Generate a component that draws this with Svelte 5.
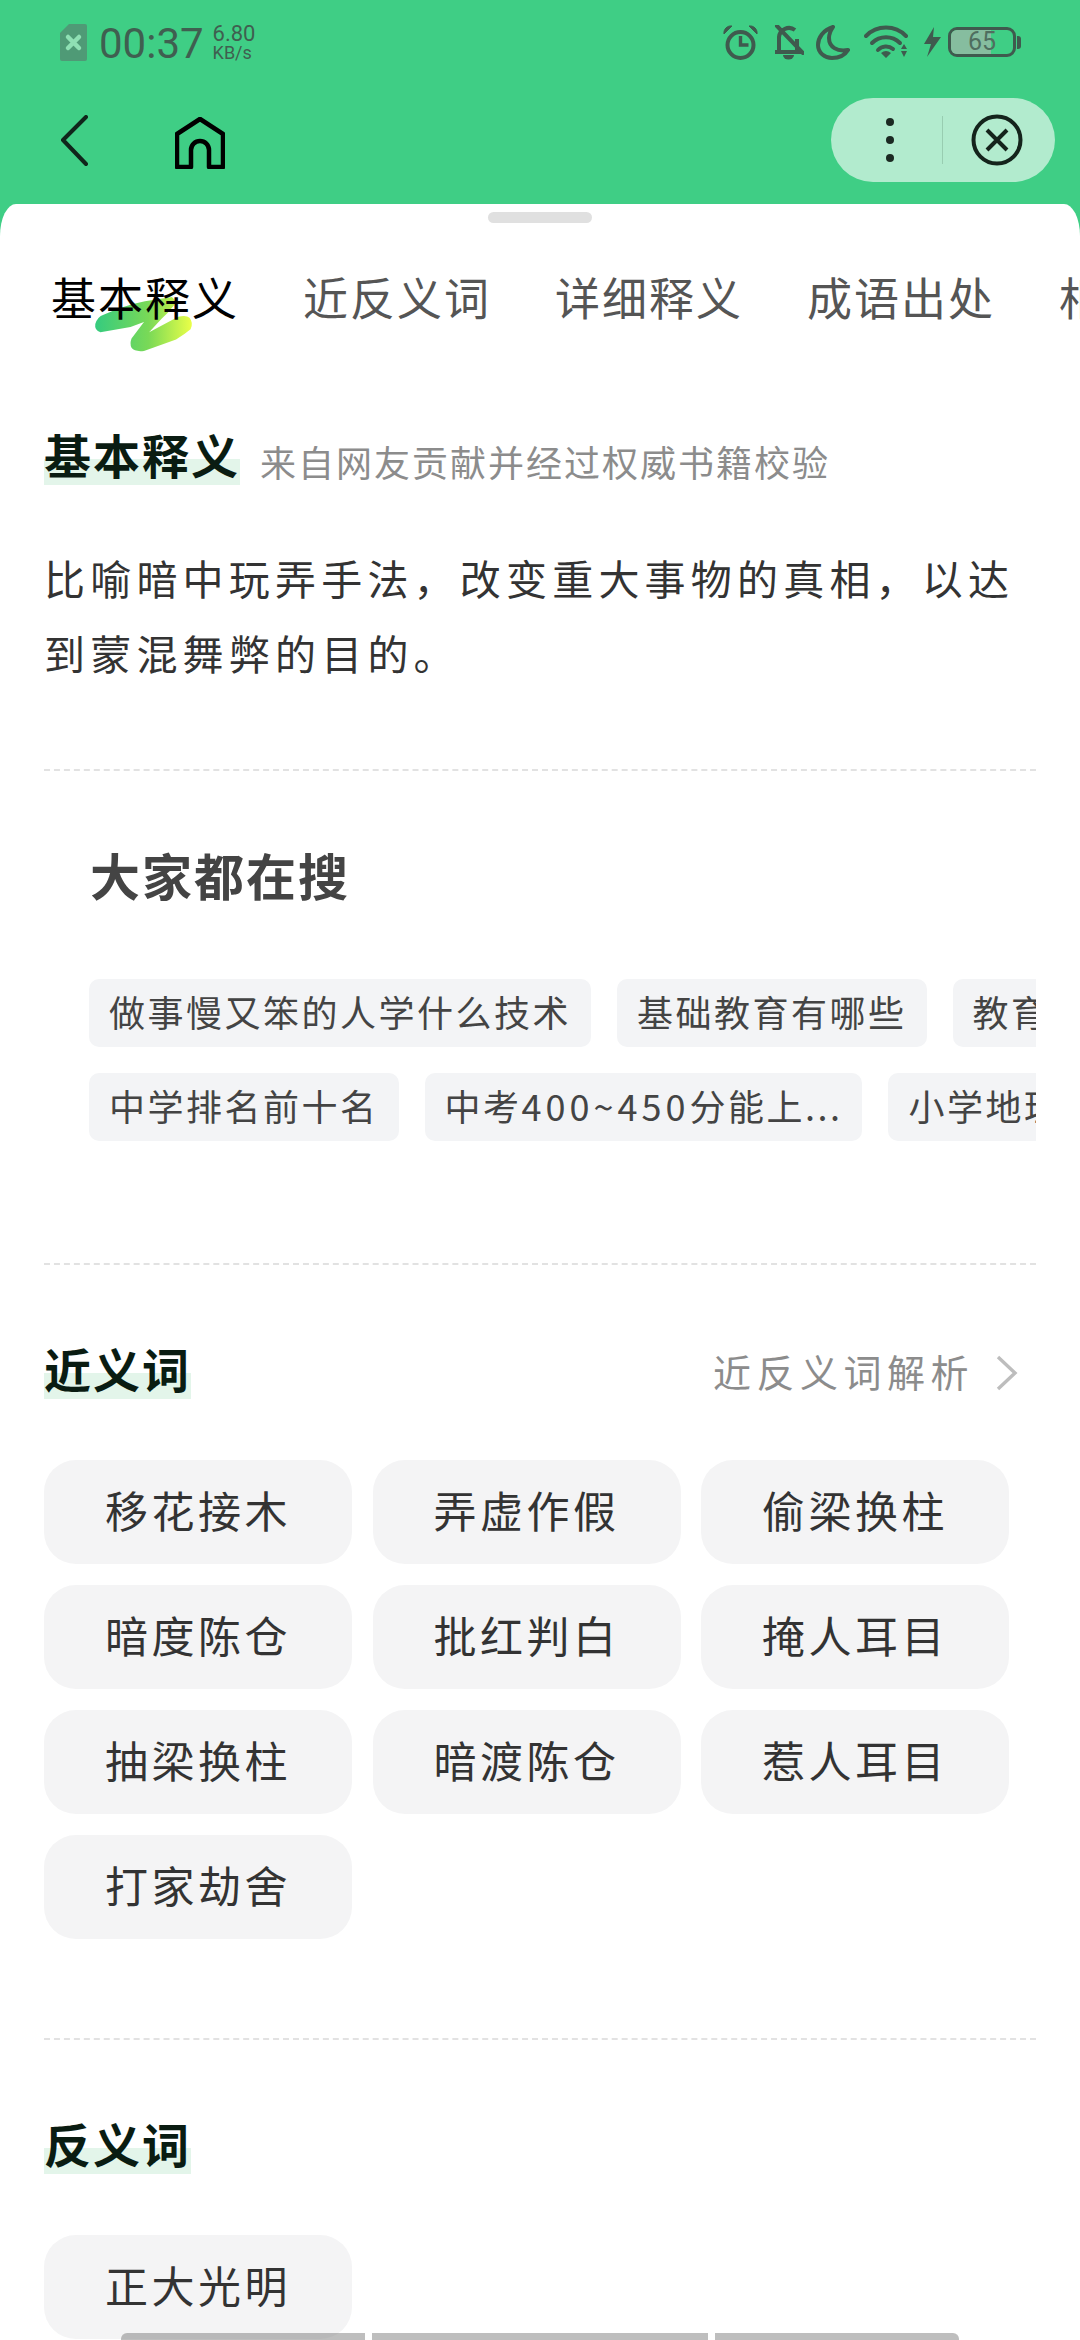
<script>
  const tabs = ["基本释义", "近反义词", "详细释义", "成语出处", "相关词语"];
  const searchRows = [
    ["做事慢又笨的人学什么技术", "基础教育有哪些", "教育培训机构"],
    ["中学排名前十名", "中考400~450分能上...", "小学地理知识"],
  ];
  const synonyms = [
    "移花接木", "弄虚作假", "偷梁换柱",
    "暗度陈仓", "批红判白", "掩人耳目",
    "抽梁换柱", "暗渡陈仓", "惹人耳目",
    "打家劫舍",
  ];
  const antonyms = ["正大光明"];

  // digits sit wider than the CJK run in the reference
  const splitDigits = (term) => term.split(/(\d+~\d+)/);
</script>

<div class="page">
  <header class="top">
    <div class="status">
      <div class="status-left">
        <svg class="sim" viewBox="0 0 27 37" width="27" height="37">
          <path d="M9 0h16a2 2 0 0 1 2 2v33a2 2 0 0 1-2 2H2a2 2 0 0 1-2-2V9z" fill="#4f9a76" />
          <path d="M8 13l11 11M19 13L8 24" stroke="#8fe0b4" stroke-width="4.5" stroke-linecap="round" />
        </svg>
        <span class="time">00:37</span>
        <span class="speed"><b>6.80</b><b class="unit">KB/s</b></span>
      </div>
      <div class="status-right">
        <svg class="ic-alarm" viewBox="0 0 35 35" width="35" height="35" fill="none" stroke="#3f5a4e">
          <circle cx="17.5" cy="20" r="13" stroke-width="4" />
          <path d="M17.5 11v9h8" stroke-width="3.4" />
          <path d="M1 9a7 7 0 0 1 8-8zM34 9a7 7 0 0 0-8-8z" fill="#3f5a4e" stroke-width="1" />
        </svg>
        <svg class="ic-bell" viewBox="0 0 31 35" width="31" height="35" fill="none" stroke="#3f5a4e" stroke-width="4">
          <path d="M6 27V12a10 10 0 0 1 16-7M24 14v13M2 27h27" />
          <path d="M10 30a5.500 4.500 0 0 0 11 0z" fill="#3f5a4e" stroke="none" />
          <path d="M4 1l26 27" stroke-linecap="round" />
        </svg>
        <svg class="ic-moon" viewBox="0 0 34 35" width="34" height="35" fill="none" stroke="#3f5a4e" stroke-width="4">
          <path d="M17 2C7 5 2 13 2 20c0 8 7 13 14 13 7 0 13-3 16-8-11 2-19-3-19-12 0-4 2-8 4-11z" stroke-linejoin="round" />
        </svg>
        <svg class="ic-wifi" viewBox="0 0 46 35" width="46" height="35" fill="none" stroke="#3f5a4e">
          <path d="M2 11a28 28 0 0 1 40 0" stroke-width="4" stroke-linecap="round" />
          <path d="M8 18a20 20 0 0 1 28 0" stroke-width="4" stroke-linecap="round" />
          <path d="M14 25a11 11 0 0 1 15-1" stroke-width="4" stroke-linecap="round" />
          <path d="M17 28a8 8 0 0 1 10 0l-5 5zM37 24l3-5 3 5zM37 26h6l-3 6z" fill="#3f5a4e" stroke="none" />
        </svg>
        <svg class="ic-bolt" viewBox="0 0 17 30" width="17" height="30">
          <path d="M10 0L0 17h7L3 30 17 10H9z" fill="#3f5a4e" />
        </svg>
        <div class="battery">
          <div class="battery-body"><i class="battery-fill"></i><span>65</span></div>
          <i class="battery-cap"></i>
        </div>
      </div>
    </div>

    <div class="nav">
      <div class="nav-left">
        <svg viewBox="0 0 28 52" width="28" height="52" fill="none" stroke="#10261b" stroke-width="4">
          <path d="M26 2L3 25l23 24" stroke-linecap="round" stroke-linejoin="round" />
        </svg>
        <svg class="home" viewBox="0 0 50 52" width="50" height="52" fill="none" stroke="#000" stroke-width="4.500">
          <path d="M2 50V17L25 2l23 15v33H34V33a9 9 0 0 0-18 0v17z" stroke-linejoin="round" />
        </svg>
      </div>
      <div class="capsule">
        <div class="dots"><i></i><i></i><i></i></div>
        <span class="capsule-line"></span>
        <svg viewBox="0 0 52 52" width="52" height="52" fill="none" stroke="#14241c">
          <circle cx="26" cy="26" r="23.500" stroke-width="4" />
          <path d="M16 16l20 20M36 16L16 36" stroke-width="4" />
        </svg>
      </div>
    </div>
  </header>

  <main class="sheet">
    <div class="handle"></div>

    <nav class="tabs">
      {#each tabs as tab, i}
        <span class="tab" class:active={i === 0}>
          {#if i === 0}
            <svg class="brush" viewBox="0 0 100 56" width="104" height="58">
              <defs>
                <linearGradient id="stroke" x1="0" x2="1" y1="0" y2="0">
                  <stop offset="0" stop-color="#35cb7f" />
                  <stop offset="0.55" stop-color="#79d957" />
                  <stop offset="1" stop-color="#eaff48" />
                </linearGradient>
              </defs>
              <path d="M2 28Q4 21 10 19Q30 10 50 6L76 2Q80 5 78 10Q72 18 66 23L54 36L82 21Q90 19 93 22Q97 27 94 33Q88 38 80 43L49 54Q40 55 37 51Q35 47 37 42L49 26L36 31L7 36Q1 34 2 28z" fill="url(#stroke)" />
            </svg>
          {/if}
          <span class="tab-label">{tab}</span>
        </span>
      {/each}
    </nav>

    <section class="intro">
      <div class="heading-line">
        <h2 class="mark">基本释义</h2>
        <span class="source">来自网友贡献并经过权威书籍校验</span>
      </div>
      <p class="meaning">比喻暗中玩弄手法，改变重大事物的真相，以达到蒙混舞弊的目的。</p>
    </section>

    <section class="search">
      <h3>大家都在搜</h3>
      <div class="search-rows">
        {#each searchRows as row}
          <div class="search-row">
            {#each row as term}
              <span class="term">
                {#each splitDigits(term) as part, i}
                  {#if i % 2}<span class="digits">{part}</span>{:else}{part}{/if}
                {/each}
              </span>
            {/each}
          </div>
        {/each}
      </div>
    </section>

    <section class="words">
      <div class="words-head">
        <h2 class="mark">近义词</h2>
        <span class="more">
          近反义词解析
          <svg viewBox="0 0 22 36" width="22" height="36" fill="none" stroke="#bdbdbd" stroke-width="3.400">
            <path d="M2 2l17 16L2 34" />
          </svg>
        </span>
      </div>
      <div class="word-grid">
        {#each synonyms as word}
          <span class="word">{word}</span>
        {/each}
      </div>
    </section>

    <section class="words last">
      <div class="words-head">
        <h2 class="mark">反义词</h2>
      </div>
      <div class="word-grid">
        {#each antonyms as word}
          <span class="word">{word}</span>
        {/each}
      </div>
    </section>
  </main>

  <div class="scrollbars"><i class="bar-a"></i><i class="bar-b"></i><i class="bar-c"></i></div>
</div>

<style>
  :global(body) {
    margin: 0;
    background: #fff;
  }

  .page {
    position: relative;
    width: 1080px;
    height: 2340px;
    overflow: hidden;
    background: #3fce85;
    font-family: "Noto Sans CJK SC", "Noto Sans", sans-serif;
    color: #222;
  }

  .top {
    height: 204px;
    box-sizing: border-box;
    padding-top: 20px;
  }

  .status {
    display: flex;
    justify-content: space-between;
    align-items: center;
    height: 44px;
    padding: 0 59px 0 60px;
  }

  .status-left,
  .status-right {
    display: flex;
    align-items: center;
  }

  .sim {
    margin-right: 12px;
  }

  .time {
    padding-top: 4px;
    font-family: Roboto, sans-serif;
    font-size: 42px;
    line-height: 44px;
    color: #3f5f50;
    margin-right: 9px;
  }

  .speed {
    display: flex;
    flex-direction: column;
    font-family: Roboto, sans-serif;
    color: #3f5f50;
  }

  .speed b {
    font-weight: 400;
    font-size: 22px;
    line-height: 21px;
  }

  .speed .unit {
    font-size: 18px;
    line-height: 17px;
  }

  .ic-bell,
  .ic-moon,
  .ic-wifi,
  .ic-bolt {
    margin-left: 14px;
  }

  .ic-bell {
    margin-left: 15px;
  }

  .ic-moon {
    margin-left: 12px;
  }

  .battery {
    display: flex;
    align-items: center;
    margin-left: 7px;
  }

  .battery-body {
    position: relative;
    width: 68px;
    height: 30px;
    box-sizing: border-box;
    border: 3px solid #3f5a4e;
    border-radius: 9px;
    overflow: hidden;
    text-align: center;
  }

  .battery-fill {
    position: absolute;
    left: 0;
    top: 0;
    bottom: 0;
    width: 40px;
    background: #86bd9f;
  }

  .battery-body span {
    position: relative;
    font-family: Roboto, sans-serif;
    font-size: 25px;
    line-height: 24px;
    display: block;
    color: #4f6e5f;
  }

  .battery-cap {
    width: 4px;
    height: 13px;
    margin-left: 1px;
    background: #3f5a4e;
    border-radius: 0 3px 3px 0;
  }

  .nav {
    display: flex;
    justify-content: space-between;
    align-items: center;
    height: 84px;
    margin-top: 34px;
    padding: 0 25px 0 60px;
  }

  .nav-left {
    display: flex;
    align-items: center;
    gap: 87px;
  }

  .nav-left svg:first-child {
    margin-top: 2px;
  }

  .home {
    margin-top: 6px;
  }

  .capsule {
    display: flex;
    align-items: center;
    width: 224px;
    height: 84px;
    padding-left: 55px;
    box-sizing: border-box;
    border-radius: 42px;
    background: #b2ebce;
  }

  .dots {
    display: flex;
    flex-direction: column;
    gap: 10px;
  }

  .dots i {
    width: 8px;
    height: 8px;
    border-radius: 50%;
    background: #1b2a22;
  }

  .capsule-line {
    width: 1px;
    height: 48px;
    margin: 0 28px 0 48px;
    background: #98cdb1;
  }

  .sheet {
    position: relative;
    height: 2136px;
    padding: 0 44px;
    box-sizing: border-box;
    background: #fff;
    border-radius: 16px 16px 0 0 / 32px 32px 0 0;
  }

  .handle {
    position: absolute;
    left: 488px;
    top: 8px;
    width: 104px;
    height: 11px;
    border-radius: 6px;
    background: #e0e0e0;
  }

  .tabs {
    display: flex;
    gap: 64px;
    height: 150px;
    padding: 63px 0 0 7px;
    box-sizing: border-box;
    margin-right: -44px;
    overflow: hidden;
  }

  .tab {
    position: relative;
    flex: none;
    font-size: 45px;
    letter-spacing: 2px;
    line-height: 60px;
    color: #555;
    white-space: nowrap;
  }

  .tab.active {
    color: #000;
  }

  .tab-label {
    position: relative;
  }

  .brush {
    position: absolute;
    left: 42px;
    top: 28px;
  }

  .intro {
    padding-top: 73px;
    height: 417px;
    box-sizing: border-box;
    border-bottom: 2px dashed #e2e2e2;
  }

  .heading-line {
    display: flex;
    align-items: flex-end;
    gap: 20px;
  }

  .mark {
    margin: 0;
    padding-bottom: 4px;
    font-size: 47px;
    font-weight: 700;
    letter-spacing: 2px;
    line-height: 54px;
    color: #0a1c12;
    background: linear-gradient(transparent 55%, #e3f5ea 55%);
  }

  .source {
    font-size: 36px;
    letter-spacing: 2px;
    line-height: 48px;
    color: #8c8c8c;
  }

  .meaning {
    margin: 55px 0 0;
    font-size: 41px;
    letter-spacing: 5.200px;
    line-height: 75px;
    color: #333;
  }

  .search {
    height: 494px;
    box-sizing: border-box;
    padding-top: 68px;
    border-bottom: 2px dashed #e2e2e2;
  }

  .search h3 {
    margin: 0 0 0 46px;
    font-size: 50px;
    font-weight: 700;
    letter-spacing: 2px;
    line-height: 70px;
    color: #444;
  }

  .search-rows {
    display: flex;
    flex-direction: column;
    gap: 26px;
    margin-top: 70px;
    padding-left: 45px;
    overflow: hidden;
  }

  .search-row {
    display: flex;
    gap: 26px;
  }

  .term {
    flex: none;
    padding: 0 20px;
    height: 68px;
    border-radius: 10px;
    background: #f3f4f6;
    font-size: 36px;
    letter-spacing: 2.500px;
    line-height: 64px;
    color: #444;
    white-space: nowrap;
  }

  .digits {
    letter-spacing: 4px;
  }

  .words {
    height: 775px;
    box-sizing: border-box;
    padding-top: 76px;
    border-bottom: 2px dashed #e2e2e2;
  }

  .words.last {
    height: auto;
    border-bottom: 0;
  }

  .words-head {
    display: flex;
    justify-content: space-between;
    align-items: center;
    padding-right: 18px;
  }

  .more {
    display: flex;
    align-items: center;
    gap: 22px;
    font-size: 38px;
    letter-spacing: 5.500px;
    color: #8c8c8c;
  }

  .more svg {
    margin-top: 6px;
  }

  .word-grid {
    display: grid;
    grid-template-columns: repeat(3, 308px);
    gap: 21px 20.500px;
    margin-top: 61px;
  }

  .word {
    height: 104px;
    border-radius: 32px;
    background: #f4f4f5;
    font-size: 43px;
    letter-spacing: 3.500px;
    line-height: 98px;
    text-align: center;
    color: #333;
  }

  .scrollbars {
    position: absolute;
    left: 121px;
    bottom: 0;
    display: flex;
    gap: 7px;
    height: 7px;
  }

  .scrollbars i {
    background: rgba(120, 120, 120, 0.48);
  }

  .bar-a {
    width: 244px;
    border-radius: 6px 0 0 0;
  }

  .bar-b {
    width: 336px;
  }

  .bar-c {
    width: 244px;
    border-radius: 0 6px 0 0;
  }
</style>
